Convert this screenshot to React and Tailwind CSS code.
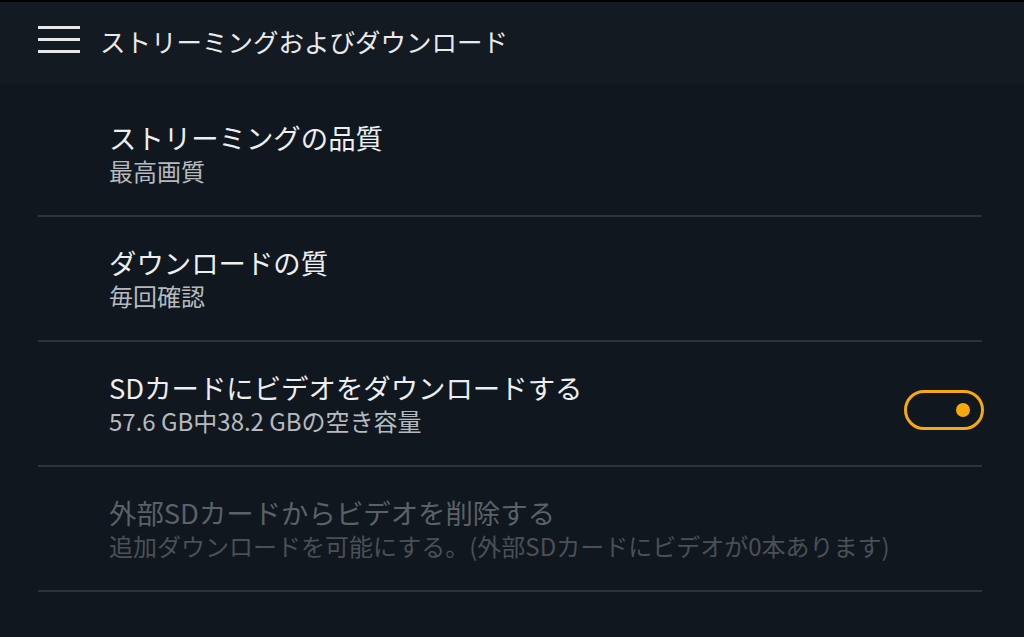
export default function App() {
  const font = { fontFamily: '"Noto Sans CJK JP", "Noto Sans", sans-serif' };
  return (
    <div className="w-[1024px] h-[637px] bg-[#10171e] border-t-2 border-black flex flex-col overflow-hidden" style={font}>
      <header className="h-[82px] bg-[#131a21] flex items-center shrink-0">
        <div className="ml-[38px] w-[42px] flex flex-col gap-[9px] mt-[-7px]">
          <span className="block h-[3px] bg-[#e6e8ea]" />
          <span className="block h-[3px] bg-[#e6e8ea]" />
          <span className="block h-[3px] bg-[#e6e8ea]" />
        </div>
        <h1 className="ml-[20px] mt-[-4px] text-[25.5px] leading-none text-[#e8eaec]">ストリーミングおよびダウンロード</h1>
      </header>
      <div className="pt-[8px] ml-[38px] mr-[42px]">
        <div className="h-[125px] border-b-2 border-[#2c333a] pt-[28px] pl-[71px]">
          <div className="text-[27.4px] leading-[34px] text-[#eceef0]">ストリーミングの品質</div>
          <div className="text-[24px] leading-[34px] text-[#b6babe]">最高画質</div>
        </div>
        <div className="h-[125px] border-b-2 border-[#2c333a] pt-[28px] pl-[71px]">
          <div className="text-[27.4px] leading-[34px] text-[#eceef0]">ダウンロードの質</div>
          <div className="text-[24px] leading-[34px] text-[#b6babe]">毎回確認</div>
        </div>
        <div className="h-[125px] border-b-2 border-[#2c333a] pt-[28px] pl-[71px] flex justify-between">
          <div>
            <div className="text-[27.4px] leading-[34px] text-[#eceef0]">SDカードにビデオをダウンロードする</div>
            <div className="text-[24px] leading-[34px] text-[#b6babe]">57.6 GB中38.2 GBの空き容量</div>
          </div>
          <div className="mt-[20px] mr-[-2px] w-[80px] h-[40px] rounded-full border-[3px] border-[#f7a90c] flex items-center justify-end pr-[11px]">
            <span className="block w-[14px] h-[14px] rounded-full bg-[#f7a90c]" />
          </div>
        </div>
        <div className="h-[125px] border-b-2 border-[#2c333a] pt-[28px] pl-[71px]">
          <div className="text-[27.4px] leading-[34px] text-[#5b6167]">外部SDカードからビデオを削除する</div>
          <div className="text-[24px] leading-[34px] text-[#4a5056]">追加ダウンロードを可能にする。(外部SDカードにビデオが0本あります)</div>
        </div>
      </div>
    </div>
  );
}
